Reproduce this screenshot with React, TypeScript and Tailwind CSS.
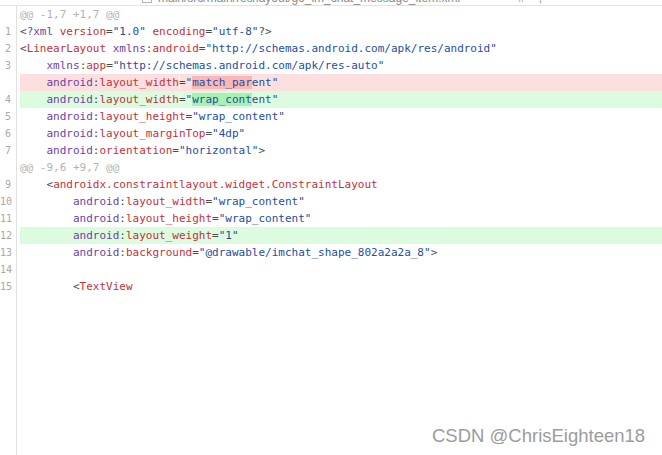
import type { ReactNode } from 'react';

type Tok = [string, string];

const P = 'text-[#4a4a4a]';
const TAG = 'text-[#c4313c]';
const NS = 'text-[#6c3fa6]';
const STR = 'text-[#1d4ea4]';

function tokenize(src: string): Tok[] {
  const out: Tok[] = [];
  const re = /(\s+)|(<\?)(\w+)|(<)([\w.]+)|(\w+)(:)(\w+)|(\w+)|(=)|("[^"]*")|(\??>)/g;
  let m: RegExpExecArray | null;
  while ((m = re.exec(src))) {
    if (m[1]) out.push([m[1], P]);
    else if (m[2]) {
      out.push(['<', P]);
      out.push(['?' + m[3], NS]);
    } else if (m[4]) {
      out.push(['<', P]);
      out.push([m[5], TAG]);
    } else if (m[6]) {
      out.push([m[6], NS]);
      out.push([':', P]);
      out.push([m[8], TAG]);
    } else if (m[9]) out.push([m[9], TAG]);
    else if (m[10]) out.push(['=', P]);
    else if (m[11]) out.push([m[11], STR]);
    else if (m[12]) out.push([m[12], P]);
  }
  return out;
}

function Code({ src }: { src: string }) {
  return (
    <>
      {tokenize(src).map(([t, c], i) => (
        <span key={i} className={c}>
          {t}
        </span>
      ))}
    </>
  );
}

function ChangedWidth({ word, rest, mark }: { word: string; rest: string; mark: string }) {
  return (
    <>
      <span className={P}>{'    '}</span>
      <span className={NS}>android</span>
      <span className={P}>:</span>
      <span className={TAG}>layout_width</span>
      <span className={`${P} shadow-[inset_1px_0_0_#ffffff]`}>=</span>
      <span className={STR}>"</span>
      <span className={`${STR} ${mark}`}>{word}</span>
      <span className={STR}>{rest}"</span>
    </>
  );
}

type Row = {
  num?: string;
  kind?: 'hunk' | 'del' | 'add';
  content: ReactNode;
};

const rows: Row[] = [
  { kind: 'hunk', content: '@@ -1,7 +1,7 @@' },
  { num: '1', content: <Code src={'<?xml version="1.0" encoding="utf-8"?>'} /> },
  { num: '2', content: <Code src={'<LinearLayout xmlns:android="http://schemas.android.com/apk/res/android"'} /> },
  { num: '3', content: <Code src={'    xmlns:app="http://schemas.android.com/apk/res-auto"'} /> },
  { kind: 'del', content: <ChangedWidth word="match_par" rest="ent" mark="bg-[#fbb6b6]" /> },
  { num: '4', kind: 'add', content: <ChangedWidth word="wrap_cont" rest="ent" mark="bg-[#a9f0b4]" /> },
  { num: '5', content: <Code src={'    android:layout_height="wrap_content"'} /> },
  { num: '6', content: <Code src={'    android:layout_marginTop="4dp"'} /> },
  { num: '7', content: <Code src={'    android:orientation="horizontal">'} /> },
  { kind: 'hunk', content: '@@ -9,6 +9,7 @@' },
  { num: '9', content: <Code src={'    <androidx.constraintlayout.widget.ConstraintLayout'} /> },
  { num: '10', content: <Code src={'        android:layout_width="wrap_content"'} /> },
  { num: '11', content: <Code src={'        android:layout_height="wrap_content"'} /> },
  { num: '12', kind: 'add', content: <Code src={'        android:layout_weight="1"'} /> },
  { num: '13', content: <Code src={'        android:background="@drawable/imchat_shape_802a2a2a_8">'} /> },
  { num: '14', content: '' },
  { num: '15', content: <Code src={'        <TextView'} /> },
];

export default function App() {
  return (
    <div className="relative flex h-[455px] w-[662px] flex-col overflow-hidden bg-white">
      <div className="flex h-[6px] shrink-0 items-start gap-[6px] overflow-hidden border-b border-[#e3e3e3] pl-[142px] font-['Liberation_Sans',sans-serif] text-[12px] leading-none text-[#8a8a8a]">
        <div className="-mt-[8px] h-[11px] w-[10px] border border-[#b5b5b5]" />
        <span className="-mt-[8px]">main/src/main/res/layout/go_im_chat_message_item.xml</span>
        <span className="-mt-[8px] ml-[52px]">#</span>
        <span className="-mt-[8px] ml-[8px]">,</span>
      </div>

      <div className="flex flex-1 flex-col font-['DejaVu_Sans_Mono',monospace] text-[11px]">
        {rows.map((r, i) => (
          <div key={i} className="flex h-[17px] leading-[17px]">
            <div className="w-[17px] shrink-0 border-r border-[#e2e2e2] pr-[5px] text-right text-[10px] text-[#a8a8a8]">
              {r.num}
            </div>
            <div className="w-[3px] shrink-0" />
            <div
              className={`flex-1 whitespace-pre ${
                r.kind === 'del'
                  ? 'bg-[#fedfdf]'
                  : r.kind === 'add'
                  ? 'bg-[#dcfbdf]'
                  : r.kind === 'hunk'
                  ? 'text-[#b3b3b3]'
                  : ''
              }`}
            >
              {r.content}
            </div>
          </div>
        ))}
        <div className="flex flex-1">
          <div className="w-[17px] shrink-0 border-r border-[#e2e2e2]" />
        </div>
      </div>

      <div className="absolute left-[432px] top-[427px] font-['Liberation_Sans',sans-serif] text-[18.5px] leading-none text-[#9c9c9c]">
        CSDN @ChrisEighteen18
      </div>
    </div>
  );
}
